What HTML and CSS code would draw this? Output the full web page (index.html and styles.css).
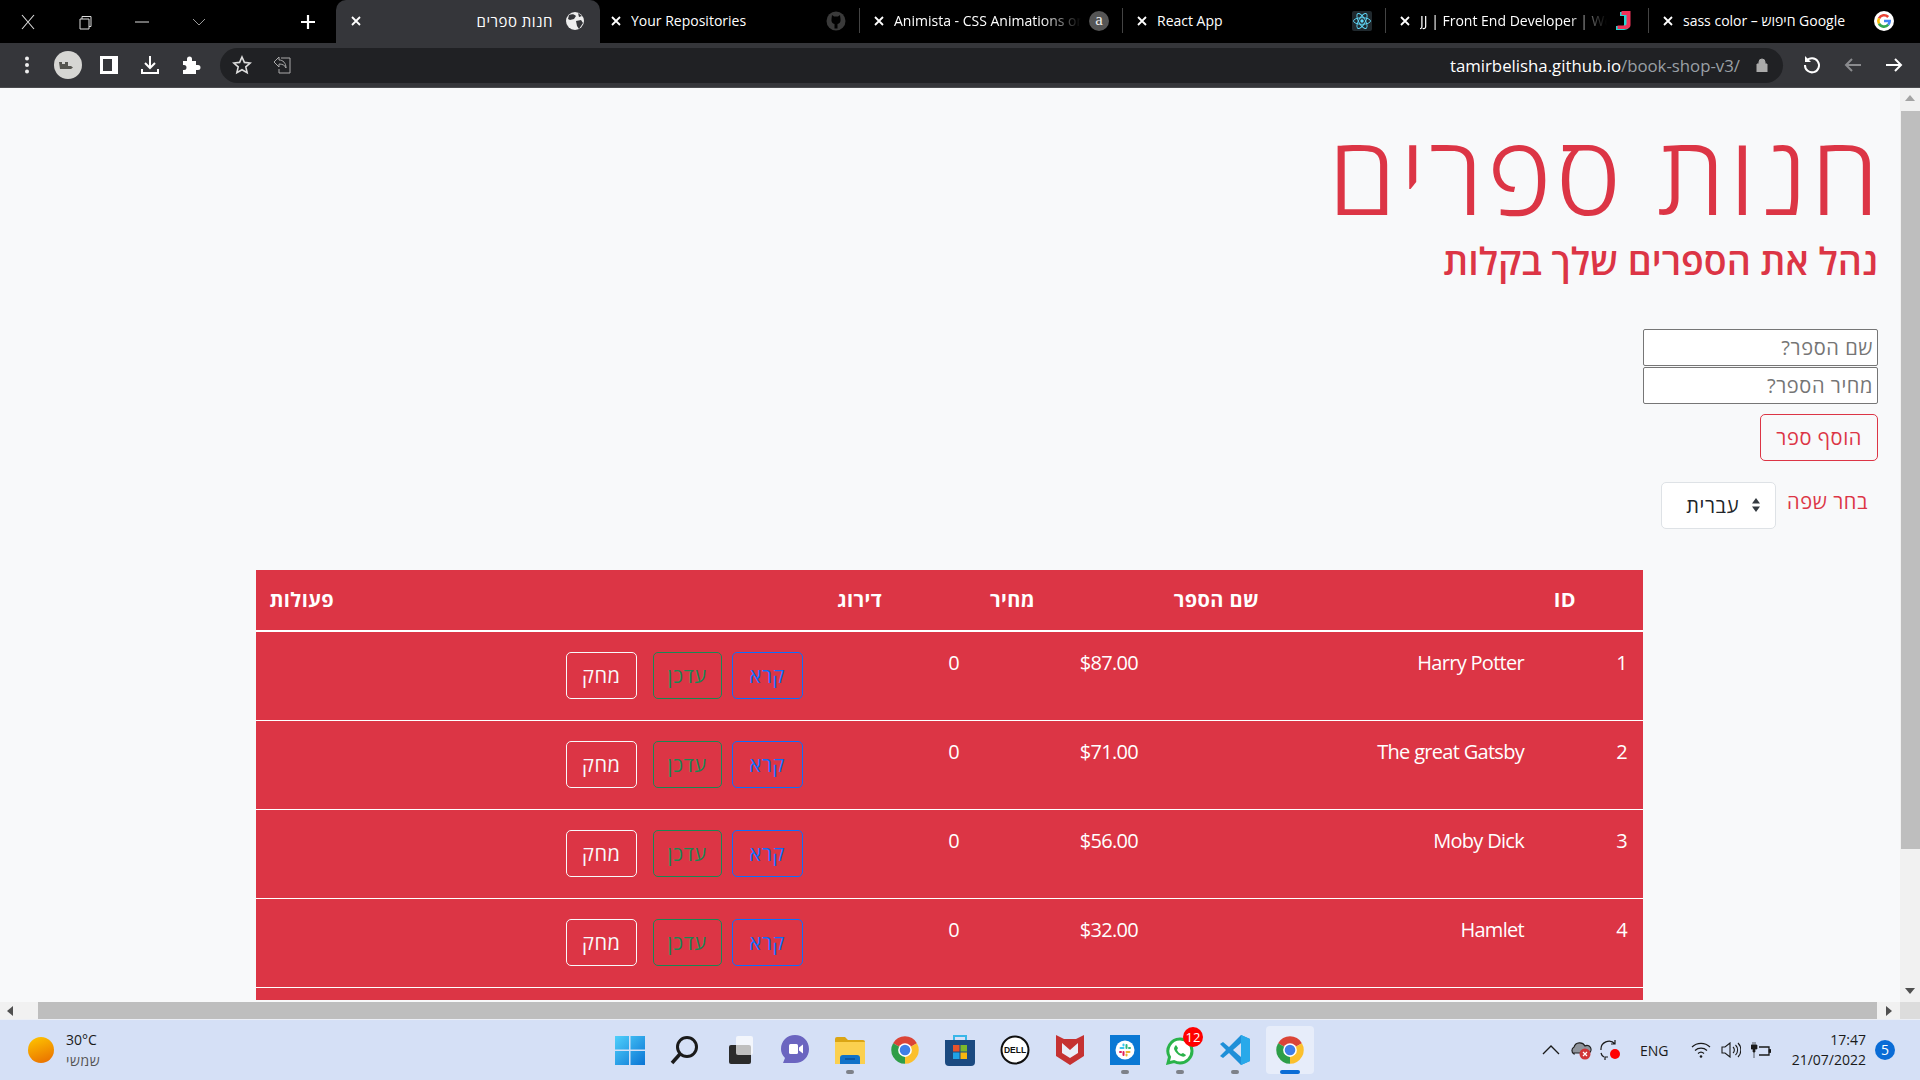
FILE: index.html
```html
<!DOCTYPE html>
<html lang="he">
<head>
    <meta charset="UTF-8">
    <meta name="viewport" content="width=device-width, initial-scale=1.0">
    <title>חנות ספרים</title>
    <link rel="stylesheet" href="styles.css">
</head>
<body>
    <svg class="sprites" width="0" height="0" aria-hidden="true">
        <symbol id="i-x" viewBox="0 0 12 12"><path d="M2 2l8 8M10 2l-8 8" stroke="currentColor" stroke-width="1.8" fill="none"/></symbol>
        <symbol id="i-chrome" viewBox="0 0 48 48">
            <path d="M24 24L43.05 13A22 22 0 0 0 4.95 13Z" fill="#db4437"/>
            <path d="M24 24L24 46A22 22 0 0 0 43.05 13Z" fill="#fbc02d"/>
            <path d="M24 24L4.95 13A22 22 0 0 0 24 46Z" fill="#2e9e48"/>
            <circle cx="24" cy="24" r="11" fill="#fff"/>
            <circle cx="24" cy="24" r="8.5" fill="#3f7fe8"/>
        </symbol>
    </svg>

    <!-- Browser tabs -->
    <div class="tabbar">
        <div class="win-controls">
            <svg viewBox="0 0 16 16"><path d="M2 1l12 14M14 1L2 15" stroke="#ddd" stroke-width="1.1" fill="none"/></svg>
            <svg viewBox="0 0 16 16"><path d="M3 5h9v10H3zM5 5V2.500h9V12.500h-2" stroke="#ddd" fill="none"/></svg>
            <svg viewBox="0 0 16 16"><path d="M1 8h14" stroke="#ddd" fill="none"/></svg>
            <svg viewBox="0 0 16 16"><path d="M2 5l6 6 6-6" stroke="#999" fill="none"/></svg>
        </div>
        <svg class="new-tab" width="16" height="16" viewBox="0 0 16 16"><path d="M8 1v14M1 8h14" stroke="#fff" stroke-width="2.2" fill="none"/></svg>
        <div class="tab tab-active">
            <svg class="tab-close" width="12" height="12"><use href="#i-x"/></svg>
            <span class="tab-title" dir="rtl">חנות ספרים</span>
            <svg class="tab-icon" width="20" height="20" viewBox="0 0 20 20"><circle cx="10" cy="10" r="9" fill="#eee"/><path d="M4 4c3-1 5-1 7 1l-2 3-4 1-2-1zM11 10l5-1 2 3-4 6-2-3zM13 2l4 3-3 1z" fill="#35363a"/></svg>
        </div>
        <div class="tab">
            <svg class="tab-close" width="12" height="12"><use href="#i-x"/></svg>
            <span class="tab-title">Your Repositories</span>
            <svg class="tab-icon" width="20" height="20" viewBox="0 0 20 20"><circle cx="10" cy="10" r="9.500" fill="#3a3a3a"/><path d="M6 4l2 1.500h4L14 4l.5 4c.5 3-1 4.500-3 5v4.500h-3V13c-2-.5-3.500-2-3-5z" fill="#000"/></svg>
        </div>
        <div class="tab">
            <svg class="tab-close" width="12" height="12"><use href="#i-x"/></svg>
            <span class="tab-title tab-fade">Animista - CSS Animations on Demand</span>
            <span class="tab-icon animista-icon">a</span>
        </div>
        <div class="tab">
            <svg class="tab-close" width="12" height="12"><use href="#i-x"/></svg>
            <span class="tab-title">React App</span>
            <svg class="tab-icon" width="20" height="20" viewBox="0 0 20 20"><rect width="20" height="20" rx="2" fill="#20292e"/><g fill="none" stroke="#61dafb" stroke-width=".9"><ellipse cx="10" cy="10" rx="8.500" ry="3.300"/><ellipse cx="10" cy="10" rx="8.500" ry="3.300" transform="rotate(60 10 10)"/><ellipse cx="10" cy="10" rx="8.500" ry="3.300" transform="rotate(120 10 10)"/></g><circle cx="10" cy="10" r="1.700" fill="#61dafb"/></svg>
        </div>
        <div class="tab">
            <svg class="tab-close" width="12" height="12"><use href="#i-x"/></svg>
            <span class="tab-title tab-fade">JJ | Front End Developer | Web</span>
            <svg class="tab-icon tab-icon-j" width="20" height="22" viewBox="0 0 20 22"><path d="M7 2h9v14c0 3-3 4-6 4H3v-4h6c1 0 2 0 2-1V6H7z" fill="#25d8d2"/><path d="M8.500 1h9v14c0 3-3 4-6 4h-7v-3.500h6.500c1 0 2.500-.5 2.500-1.500V5h-5z" fill="#f0345a"/></svg>
        </div>
        <div class="tab tab-last">
            <svg class="tab-close" width="12" height="12"><use href="#i-x"/></svg>
            <span class="tab-title">sass color – חיפוש Google</span>
            <svg class="tab-icon" width="20" height="20" viewBox="0 0 20 20"><circle cx="10" cy="10" r="10" fill="#fff"/><g fill="none" stroke-width="2.600"><path d="M14.200 6A5.700 5.700 0 0 0 5 7.300" stroke="#ea4335"/><path d="M5 7.300a5.700 5.700 0 0 0 0 5.400" stroke="#fbbc05"/><path d="M5 12.700a5.700 5.700 0 0 0 9.300 1" stroke="#34a853"/><path d="M14.300 13.700A5.700 5.700 0 0 0 15.700 10H10" stroke="#4285f4"/></g></svg>
        </div>
    </div>

    <!-- Browser toolbar -->
    <div class="toolbar">
        <span class="tb-btn"><svg width="6" height="18" viewBox="0 0 6 18"><circle cx="3" cy="2.500" r="2" fill="#eee"/><circle cx="3" cy="9" r="2" fill="#eee"/><circle cx="3" cy="15.500" r="2" fill="#eee"/></svg></span>
        <span class="tb-btn"><svg width="28" height="28" viewBox="0 0 28 28"><circle cx="14" cy="14" r="14" fill="#d6d6d3"/><path d="M5 11h3v2h3v-2h3v4h3l2 1.500-2 1.500H6z" fill="#55554f"/></svg></span>
        <span class="tb-btn"><svg width="18" height="18" viewBox="0 0 18 18"><path d="M0 0h18v18H0zM3 3v12h9V3z" fill="#fff" fill-rule="evenodd"/></svg></span>
        <span class="tb-btn"><svg width="20" height="20" viewBox="0 0 20 20"><path d="M10 1v11M5 8l5 5 5-5M2 14v4h16v-4" stroke="#fff" stroke-width="2" fill="none"/></svg></span>
        <span class="tb-btn"><svg width="20" height="20" viewBox="0 0 20 20"><path d="M2 6h4V4a2.500 2.500 0 0 1 5 0v2h4v4h2a2.500 2.500 0 0 1 0 5h-2v4H2v-4h1a2.500 2.500 0 0 0 0-5H2z" fill="#fff"/></svg></span>
        <div class="omnibox">
            <svg width="20" height="20" viewBox="0 0 20 20"><path d="M10 2l2.400 5.400 5.800.6-4.400 3.900 1.300 5.800L10 14.700l-5.100 3 1.300-5.800L1.800 8l5.800-.6z" stroke="#ddd" stroke-width="1.600" fill="none"/></svg>
            <svg width="20" height="20" viewBox="0 0 20 20"><path d="M7 2L2 7l5 5V9c3 0 6 1 7 4 0-5-3-8-7-8zM9 3h9v15H7v-4" stroke="#aaa" stroke-width="1" fill="none"/></svg>
            <div class="url" dir="ltr"><b>tamirbelisha.github.io</b>/book-shop-v3/</div>
            <svg width="12" height="14" viewBox="0 0 12 14"><path d="M1 6h10v8H1zM3 6V4a3 3 0 0 1 6 0v2" fill="#aaa" stroke="#aaa" stroke-width="1" fill-rule="evenodd"/></svg>
        </div>
        <span class="tb-btn"><svg width="20" height="20" viewBox="0 0 20 20"><path d="M4.500 6A7 7 0 1 1 3 10" stroke="#fff" stroke-width="2" fill="none"/><path d="M3 1v6h6z" fill="#fff"/></svg></span>
        <span class="tb-btn"><svg width="18" height="18" viewBox="0 0 18 18"><path d="M17 9H2M8 3L2 9l6 6" stroke="#8a8b8e" stroke-width="2" fill="none"/></svg></span>
        <span class="tb-btn"><svg width="18" height="18" viewBox="0 0 18 18"><path d="M1 9h15M10 3l6 6-6 6" stroke="#fff" stroke-width="2" fill="none"/></svg></span>
    </div>

    <!-- Page viewport -->
    <div class="viewport">
        <main class="page" dir="rtl">
            <h1 class="title">חנות ספרים</h1>
            <h2 class="subtitle">נהל את הספרים שלך בקלות</h2>

            <form class="book-form">
                <input class="text-input" type="text" placeholder="שם הספר?">
                <input class="text-input" type="text" placeholder="מחיר הספר?">
                <button class="btn btn-add" type="button">הוסף ספר</button>
            </form>

            <div class="lang-row">
                <label class="lang-label">בחר שפה</label>
                <div class="lang-select">
                    <select><option>עברית</option></select>
                    <svg width="10" height="16" viewBox="0 0 10 16"><path d="M5 1l4 5.500H1zM5 15L1 9.500h8z" fill="#343a40"/></svg>
                </div>
            </div>

            <table class="books">
                <thead>
                    <tr>
                        <th>ID</th>
                        <th>שם הספר</th>
                        <th>מחיר</th>
                        <th>דירוג</th>
                        <th>פעולות</th>
                    </tr>
                </thead>
                <tbody>
                    <tr>
                        <td>1</td>
                        <td>Harry Potter</td>
                        <td>$87.00</td>
                        <td>0</td>
                        <td class="actions"><button class="btn btn-read">קרא</button><button class="btn btn-update">עדכן</button><button class="btn btn-delete">מחק</button></td>
                    </tr>
                    <tr>
                        <td>2</td>
                        <td>The great Gatsby</td>
                        <td>$71.00</td>
                        <td>0</td>
                        <td class="actions"><button class="btn btn-read">קרא</button><button class="btn btn-update">עדכן</button><button class="btn btn-delete">מחק</button></td>
                    </tr>
                    <tr>
                        <td>3</td>
                        <td>Moby Dick</td>
                        <td>$56.00</td>
                        <td>0</td>
                        <td class="actions"><button class="btn btn-read">קרא</button><button class="btn btn-update">עדכן</button><button class="btn btn-delete">מחק</button></td>
                    </tr>
                    <tr>
                        <td>4</td>
                        <td>Hamlet</td>
                        <td>$32.00</td>
                        <td>0</td>
                        <td class="actions"><button class="btn btn-read">קרא</button><button class="btn btn-update">עדכן</button><button class="btn btn-delete">מחק</button></td>
                    </tr>
                </tbody>
            </table>
        </main>

        <div class="vscroll">
            <span class="arrow arrow-up"></span>
            <div class="vscroll-track"><div class="vscroll-thumb"></div></div>
            <span class="arrow arrow-down"></span>
        </div>
    </div>

    <div class="hscroll">
        <span class="hscroll-end"><span class="arrow arrow-left"></span></span>
        <div class="hscroll-thumb"></div>
        <span class="hscroll-end hscroll-end-right"><span class="arrow arrow-right"></span></span>
        <span class="hscroll-corner"></span>
    </div>

    <!-- Windows taskbar -->
    <footer class="taskbar">
        <div class="weather">
            <span class="sun"></span>
            <div class="weather-text">
                <div class="temp">30°C</div>
                <div class="cond" dir="rtl">שמשי</div>
            </div>
        </div>

        <div class="apps">
            <span class="app"><svg width="30" height="30" viewBox="0 0 30 30"><defs><linearGradient id="win" x1="0" y1="0" x2="1" y2="1"><stop offset="0" stop-color="#4fd0fb"/><stop offset="1" stop-color="#0a74d4"/></linearGradient></defs><path d="M0 1h14v13.500H0zM15.500 1H30v13.500H15.500zM0 16h14v14H0zM15.500 16H30v14H15.500z" fill="url(#win)"/></svg></span>
            <span class="app"><svg width="30" height="30" viewBox="0 0 30 30"><circle cx="17" cy="12" r="9.500" fill="none" stroke="#1a1a1a" stroke-width="3"/><path d="M10 19l-8 9" stroke="#1a1a1a" stroke-width="3.500"/></svg></span>
            <span class="app"><svg width="30" height="30" viewBox="0 0 30 30"><rect x="4" y="10" width="22" height="19" rx="2" fill="#2b2b2b"/><rect x="11" y="1" width="17" height="19" rx="2" fill="#fff" opacity=".7"/></svg></span>
            <span class="app"><svg width="30" height="32" viewBox="0 0 30 32"><path d="M15 1c8 0 14 6 14 14s-6 14-14 14H3l2-5C2 21 1 18 1 15 1 7 7 1 15 1z" fill="#6b65c0"/><rect x="9" y="10" width="9" height="10" rx="1.500" fill="#fff"/><path d="M19 13.500l4-3v9l-4-3z" fill="#fff"/></svg></span>
            <span class="app"><svg width="30" height="28" viewBox="0 0 30 28"><path d="M0 3a2 2 0 0 1 2-2h8l3 3h15a2 2 0 0 1 2 2v4H0z" fill="#dba514"/><path d="M0 6h30v22H0z" fill="#fbd04f"/><path d="M5 22a3 3 0 0 1 3-3h14a3 3 0 0 1 3 3v6H5z" fill="#1172c9"/><path d="M10 23h10" stroke="#0b4f96" stroke-width="1.500"/></svg><i class="dot"></i></span>
            <span class="app"><svg width="30" height="30"><use href="#i-chrome"/></svg></span>
            <span class="app"><svg width="30" height="32" viewBox="0 0 30 32"><path d="M9 6V2h12v4" fill="none" stroke="#38b6e8" stroke-width="2"/><path d="M0 6h30v22a4 4 0 0 1-4 4H4a4 4 0 0 1-4-4z" fill="#1b4a80"/><rect x="8" y="11" width="6.500" height="6.500" fill="#e8532b"/><rect x="15.500" y="11" width="6.500" height="6.500" fill="#7db82b"/><rect x="8" y="18.500" width="6.500" height="6.500" fill="#20a3e8"/><rect x="15.500" y="18.500" width="6.500" height="6.500" fill="#f7b70f"/></svg></span>
            <span class="app"><svg width="30" height="30" viewBox="0 0 30 30"><circle cx="15" cy="15" r="13.500" fill="#fff" stroke="#0f0f0f" stroke-width="2"/><text class="dell-text" x="15" y="18" text-anchor="middle">DELL</text></svg></span>
            <span class="app"><svg width="28" height="30" viewBox="0 0 28 30"><path d="M0 0l8 4h12l8-4v21l-14 9-14-9z" fill="#c53232"/><path d="M6 8l8 7 8-7v10l-8 5-8-5z" fill="#e9eef9"/></svg></span>
            <span class="app"><svg width="30" height="30" viewBox="0 0 30 30"><rect width="30" height="30" fill="#0a78d4"/><circle cx="15" cy="15" r="9.500" fill="#fff"/><rect x="9.500" y="12" width="5" height="2" rx="1" fill="#36c5f0"/><rect x="12.500" y="8.500" width="2" height="3" rx="1" fill="#36c5f0"/><rect x="15.500" y="9" width="2" height="5" rx="1" fill="#2eb67d"/><rect x="18" y="12" width="3" height="2" rx="1" fill="#2eb67d"/><rect x="15.500" y="16" width="5" height="2" rx="1" fill="#ecb22e"/><rect x="15.500" y="18.500" width="2" height="3" rx="1" fill="#ecb22e"/><rect x="12.500" y="16" width="2" height="5" rx="1" fill="#e01e5a"/><rect x="9" y="16" width="3" height="2" rx="1" fill="#e01e5a"/></svg><i class="dot"></i></span>
            <span class="app"><svg width="30" height="30" viewBox="0 0 30 30"><path d="M15 4a12 12 0 0 1 0 24c-2 0-4-.5-6-1.500L3 28l1.500-6A12 12 0 0 1 15 4z" fill="#fff" stroke="#2ab34a" stroke-width="3"/><path d="M11 10l2 3-1 2c1 2 2 3 4 4l2-1 3 2c-1 2-3 2-5 1-3-1-6-4-7-7 0-2 1-3 2-4z" fill="#2ab34a"/></svg><i class="dot"></i><b class="app-badge">12</b></span>
            <span class="app"><svg width="30" height="30" viewBox="0 0 30 30"><path d="M21 0l9 4v22l-9 4L9 18l-6 5-3-2 6-6-6-6 3-2 6 5z" fill="#1e8fd8"/><path d="M21 0l9 4v22l-9 4z" fill="#29a9ea"/><path d="M21 8l-8 7 8 7z" fill="#d5e0f6"/></svg><i class="dot"></i></span>
            <span class="app app-active"><svg width="30" height="30"><use href="#i-chrome"/></svg><i class="dot dot-active"></i></span>
        </div>

        <div class="tray">
            <span class="tray-icon"><svg width="18" height="10" viewBox="0 0 18 10"><path d="M1 9l8-8 8 8" stroke="#1a1a1a" stroke-width="1.300" fill="none"/></svg></span>
            <span class="tray-icon"><svg width="22" height="20" viewBox="0 0 22 20"><path d="M4 14a4 4 0 0 1 0-7 6 6 0 0 1 11-1 4 4 0 0 1 4 7H4z" fill="#8f949c" stroke="#222" stroke-width="1.200"/><circle cx="15" cy="14" r="5.500" fill="#d13438"/><path d="M13 12l4 4M17 12l-4 4" stroke="#fff" stroke-width="1.200"/></svg></span>
            <span class="tray-icon"><svg width="22" height="22" viewBox="0 0 22 22"><path d="M1 11a8 8 0 0 1 14-6M15 1v4h-4M8 18H5v3M4 18a6 6 0 0 1-3-4" stroke="#1a1a1a" stroke-width="1.200" fill="none"/><circle cx="15" cy="15" r="5" fill="#f00"/></svg></span>
            <span class="lang">ENG</span>
            <span class="tray-icon"><svg width="20" height="16" viewBox="0 0 20 16"><path d="M1 5a13 13 0 0 1 18 0M4 8.500a9 9 0 0 1 12 0M7 11.500a4.500 4.500 0 0 1 6 0" stroke="#1a1a1a" stroke-width="1.200" fill="none"/><circle cx="10" cy="14.500" r="1.300" fill="#1a1a1a"/></svg></span>
            <span class="tray-icon"><svg width="20" height="16" viewBox="0 0 20 16"><path d="M1 5h3l5-4v14l-5-4H1zM12 5a4 4 0 0 1 0 6M14.500 3a7 7 0 0 1 0 10M17 1a10 10 0 0 1 0 14" stroke="#1a1a1a" stroke-width="1.100" fill="none"/></svg></span>
            <span class="tray-icon"><svg width="20" height="16" viewBox="0 0 20 16"><path d="M8 5h10v8H8" stroke="#1a1a1a" stroke-width="1.300" fill="none"/><path d="M18 7.500h2v3h-2zM0 3h6v4H4v3H2V7H0zM2 0v3M4 0v3M3 10v6" fill="#1a1a1a" stroke="#1a1a1a" stroke-width=".7"/></svg></span>
            <div class="clock">
                <div>17:47</div>
                <div>21/07/2022</div>
            </div>
            <span class="notif">5</span>
        </div>
    </footer>
</body>
</html>
```

FILE: styles.css
```css
/* General Page Styling */
* {
    box-sizing: border-box;
}

html, body {
    margin: 0;
    padding: 0;
    width: 1920px;
    height: 1080px;
    overflow: hidden;
}

body {
    font-family: "Open Sans", "Noto Sans", "Liberation Sans", sans-serif;
    background-color: #f8f9fa;
    display: flex;
    flex-direction: column;
}

.sprites {
    display: block;
    height: 0;
}

/* Browser Tabs */
.tabbar {
    height: 43px;
    background-color: #000;
    display: flex;
    align-items: center;
    color: #fff;
    font-size: 14px;
    flex-shrink: 0;
}

.win-controls {
    display: flex;
    align-items: center;
    gap: 41px;
    padding-left: 20px;
}

.win-controls svg {
    width: 16px;
    height: 16px;
}

.new-tab {
    margin-left: 93px;
    margin-right: 20px;
}

.tab {
    width: 263px;
    height: 43px;
    display: flex;
    align-items: center;
    padding-left: 10px;
    padding-right: 3px;
    padding-bottom: 2px;
}

.tab::after {
    content: "";
    width: 1px;
    height: 25px;
    margin-left: 13px;
    background-color: #444;
}

.tab-active {
    width: 264px;
    background-color: #35363a;
    border-radius: 10px 10px 0 0;
    padding-right: 15px;
    padding-left: 14px;
}

.tab-active::after, .tab-last::after {
    display: none;
}

.tab-last {
    padding-right: 21px;
}

.tab-active .tab-title {
    font-size: 15px;
    letter-spacing: .5px;
    margin-left: 9px;
    margin-right: 12px;
}

.tab-close {
    flex-shrink: 0;
    color: #fff;
}

.tab-title {
    flex: 1;
    margin: 0 8px 0 9px;
    white-space: nowrap;
    overflow: hidden;
    color: #fff;
}

.tab-fade {
    -webkit-mask-image: linear-gradient(to left, transparent 0, #000 40px);
    mask-image: linear-gradient(to left, transparent 0, #000 40px);
}

.tab-icon {
    flex-shrink: 0;
}

.tab-icon-j {
    margin-left: -2px;
    margin-right: 2px;
}

.animista-icon {
    width: 20px;
    height: 20px;
    border-radius: 50%;
    background-color: #555;
    color: #eee;
    font-family: "Liberation Serif", serif;
    font-size: 17px;
    line-height: 17px;
    text-align: center;
}

/* Browser Toolbar */
.toolbar {
    height: 45px;
    background-color: #35363a;
    display: flex;
    align-items: center;
    gap: 13px;
    padding-left: 13px;
    padding-right: 12px;
    border-bottom: 1px solid #4a4b4e;
    flex-shrink: 0;
}

.tb-btn {
    width: 28px;
    height: 28px;
    display: flex;
    align-items: center;
    justify-content: center;
}

.omnibox {
    flex: 1;
    height: 35px;
    margin: 0 2px;
    background-color: #202124;
    border-radius: 18px;
    display: flex;
    align-items: center;
    gap: 20px;
    padding-left: 12px;
    padding-right: 15px;
}

.url {
    flex: 1;
    text-align: right;
    font-size: 16.8px;
    color: #9aa0a6;
    margin-right: -4px;
}

.url b {
    font-weight: 400;
    color: #fff;
}

/* Page Content */
.viewport {
    height: 914px;
    display: flex;
    flex-shrink: 0;
}

.page {
    width: 1900px;
    height: 912px;
    overflow: hidden;
    padding-right: 22px;
    padding-top: 24px;
    background-color: #f8f9fa;
    color: #dc3545;
}

.title {
    margin: 0 -5px 0 0;
    font-size: 110px;
    font-weight: 300;
    line-height: 120px;
    letter-spacing: 4px;
}

.subtitle {
    margin: 8px 0 0;
    font-size: 37.5px;
    font-weight: 600;
    line-height: 42px;
}

.book-form {
    margin-top: 47px;
    display: flex;
    flex-direction: column;
    align-items: flex-start;
}

.text-input {
    width: 235px;
    height: 37px;
    margin-bottom: 0.5px;
    padding: 0 4px;
    font-family: inherit;
    font-size: 20px;
    letter-spacing: .6px;
    border: 1px solid #767676;
    border-radius: 2px;
    background-color: #fff;
}

.text-input::placeholder {
    color: #757575;
}

.btn {
    font-family: inherit;
    font-size: 20px;
    line-height: 30px;
    letter-spacing: .6px;
    padding: 7.5px 15px;
    background: transparent;
    border: 1px solid;
    border-radius: 5px;
}

.btn-add {
    margin-top: 10px;
    color: #dc3545;
    border-color: #dc3545;
}

.lang-row {
    margin-top: 21px;
    display: flex;
    align-items: flex-start;
    padding-right: 10px;
}

.lang-label {
    font-size: 20px;
    line-height: 30px;
    letter-spacing: .6px;
    margin-top: 5px;
    margin-left: 11px;
}

.lang-select {
    position: relative;
    width: 115px;
    height: 47px;
}

.lang-select select {
    width: 100%;
    height: 100%;
    appearance: none;
    font-family: inherit;
    font-size: 20px;
    letter-spacing: .6px;
    color: #212529;
    background-color: #fff;
    border: 1px solid #dee2e6;
    border-radius: 5px;
    padding: 0 36px 0 10px;
}

.lang-select svg {
    position: absolute;
    top: 15px;
    right: 15px;
    pointer-events: none;
}

/* Books Table */
.books {
    display: block;
    width: 1387px;
    margin-top: 41px;
    margin-right: 235px;
    background-color: #dc3545;
    color: #fff;
    font-size: 20px;
    line-height: 30px;
    border-collapse: collapse;
    padding-bottom: 40px;
}

.books thead, .books tbody {
    display: block;
}

.books tr {
    display: grid;
    border-bottom: 1px solid #fff;
}

.books thead tr {
    grid-template-columns: 317px 224px 153px 548px 1fr;
    padding-right: 51px;
    border-bottom-width: 2px;
}

.books tbody tr {
    grid-template-columns: 103px 386px 179px 172px 1fr;
    height: 89px;
}

.books th, .books td {
    padding: 16px;
    padding-left: 0;
    text-align: right;
}

.books th {
    padding-top: 15px;
    padding-bottom: 15px;
    font-weight: 700;
    letter-spacing: .4px;
}

.books td {
    letter-spacing: -.7px;
}

.books td.actions {
    padding: 20px 0 0;
    display: flex;
    gap: 10px;
    align-items: flex-start;
}

.btn-read {
    color: #0d6efd;
    border-color: #0d6efd;
    padding-left: 17px;
    padding-right: 17px;
}

.btn-update {
    color: #198754;
    border-color: #198754;
    margin-left: 6px;
    padding-left: 14px;
    padding-right: 14px;
}

.btn-delete {
    color: #f8f9fa;
    border-color: #f8f9fa;
}

/* Scrollbars */
.vscroll {
    width: 20px;
    display: flex;
    flex-direction: column;
    align-items: center;
    background-color: #f1f1f1;
}

.vscroll-track {
    flex: 1;
    width: 100%;
    padding-left: 1px;
}

.vscroll-thumb {
    height: 738px;
    margin-top: 1px;
    background-color: #bebebe;
}

.arrow {
    display: block;
    width: 0;
    height: 0;
    border: 5px solid transparent;
    flex-shrink: 0;
}

.arrow-up {
    border-bottom: 6px solid #a3a3a3;
    border-top: 0;
    margin: 7px 0 9px;
}

.arrow-down {
    border-top: 6px solid #505050;
    border-bottom: 0;
    margin: 8px 0;
}

.arrow-left {
    border-right: 6px solid #505050;
    border-left: 0;
}

.arrow-right {
    border-left: 6px solid #505050;
    border-right: 0;
}

.hscroll {
    height: 18px;
    display: flex;
    background-color: #f1f1f1;
    border-bottom: 1px solid #eceff6;
    flex-shrink: 0;
}

.hscroll-end {
    width: 38px;
    display: flex;
    align-items: center;
    padding-left: 7px;
}

.hscroll-end-right {
    width: 23px;
    padding-left: 9px;
}

.hscroll-thumb {
    width: 1839px;
    background-color: #bebebe;
}

.hscroll-corner {
    width: 20px;
    background-color: #dcdcdc;
}

/* Windows Taskbar */
.taskbar {
    flex: 1;
    background-color: #d5e0f6;
    display: grid;
    grid-template-columns: 1fr auto 1fr;
    align-items: center;
    color: #1a1a1a;
}

.weather {
    display: flex;
    align-items: center;
    padding-left: 28px;
    gap: 12px;
}

.sun {
    width: 26px;
    height: 26px;
    border-radius: 50%;
    background: linear-gradient(160deg, #ffc800, #e86a00);
}

.weather-text {
    font-size: 14px;
    line-height: 21px;
}

.cond {
    color: #555;
    text-align: right;
    letter-spacing: .6px;
}

.apps {
    display: flex;
    gap: 7px;
}

.app {
    position: relative;
    width: 48px;
    height: 48px;
    display: flex;
    align-items: center;
    justify-content: center;
    border-radius: 4px;
}

.app-active {
    background-color: #e7edfa;
}

.dot {
    position: absolute;
    bottom: 0;
    left: 20px;
    width: 8px;
    height: 4px;
    border-radius: 2px;
    background-color: #7d8189;
}

.dot-active {
    left: 14px;
    width: 20px;
    background-color: #0a6cd6;
}

.app-badge {
    position: absolute;
    top: 1px;
    right: 1px;
    width: 20px;
    height: 20px;
    border-radius: 50%;
    background-color: #f00;
    color: #fff;
    font-size: 13px;
    font-weight: 400;
    line-height: 20px;
    text-align: center;
}

.dell-text {
    font-family: "Liberation Sans", sans-serif;
    font-size: 8.5px;
    font-weight: 700;
    fill: #111;
}

.tray {
    display: flex;
    align-items: center;
    justify-content: flex-end;
    padding-right: 25px;
}

.tray-icon {
    width: 30px;
    display: flex;
    justify-content: center;
}

.lang {
    width: 28px;
    margin: 0 18px 0 14px;
    font-size: 14px;
    white-space: nowrap;
}

.clock {
    width: 90px;
    text-align: right;
    font-size: 14px;
    line-height: 20px;
}

.notif {
    width: 20px;
    height: 20px;
    margin-left: 9px;
    border-radius: 50%;
    background-color: #0a6cd6;
    color: #fff;
    font-size: 14px;
    line-height: 20px;
    text-align: center;
}
```
